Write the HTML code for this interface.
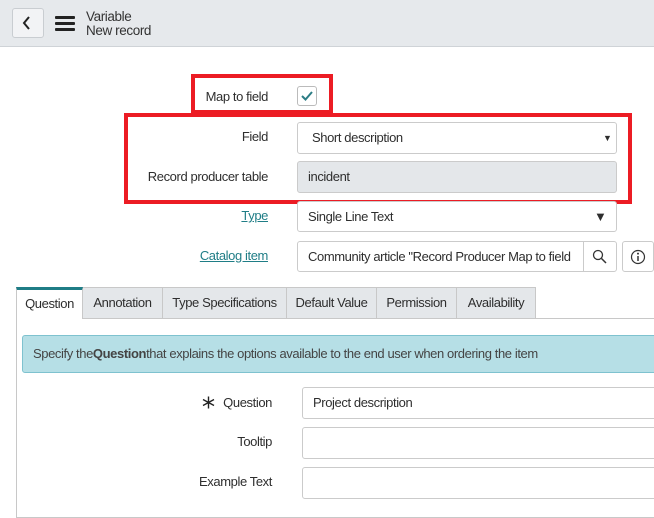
<!DOCTYPE html>
<html><head><meta charset="utf-8"><style>
*{box-sizing:border-box;margin:0;padding:0}
body{width:654px;height:518px;overflow:hidden;background:#fff;font-family:"Liberation Sans",sans-serif;font-size:13px;color:#2e2e2e;position:relative;letter-spacing:-0.4px}
.a{position:absolute}
.lbl{position:absolute;text-align:right;white-space:nowrap;line-height:16px}
.inp{position:absolute;border:1px solid #cbcbcb;border-radius:3px;background:#fff;padding-left:10px;line-height:29px;white-space:nowrap;overflow:hidden}
.red{position:absolute;border:4px solid #ec1c24}
.tab{position:absolute;top:287px;height:31px;background:#e4e7ea;border-right:1px solid #c8c8c8;border-top:1px solid #c8c8c8;line-height:30px;text-align:center}
a{color:#1f7d86;text-decoration:underline}
</style></head><body>
<div class="a" style="left:0;top:0;width:654px;height:47px;background:#e6e9ec;border-bottom:1px solid #cfd3d7"></div>
<div class="a" style="left:12px;top:8px;width:32px;height:30px;border:1px solid #c9cdd1;border-radius:3px;background:#f2f3f5"></div>
<svg class="a" style="left:22px;top:16px" width="10" height="14"><path d="M7 1 L2 7 L7 13" stroke="#222" stroke-width="2" fill="none"/></svg>
<div class="a" style="left:55px;top:16px;width:20px;height:3px;background:#222;border-radius:1px"></div>
<div class="a" style="left:55px;top:22px;width:20px;height:3px;background:#222;border-radius:1px"></div>
<div class="a" style="left:55px;top:28px;width:20px;height:3px;background:#222;border-radius:1px"></div>
<div class="a" style="left:86px;top:10px;font-size:13.5px;line-height:14px;color:#333">Variable<br>New record</div>

<div class="red" style="left:191px;top:74px;width:142px;height:40px"></div>
<div class="lbl" style="left:150px;width:118px;top:89px">Map to field</div>
<div class="a" style="left:297px;top:86px;width:20px;height:20px;border:1px solid #bbb;border-radius:3px;background:#fff"></div>
<svg class="a" style="left:300px;top:90px" width="14" height="12"><path d="M2 6 L5.5 9.5 L12 2" stroke="#2c7d85" stroke-width="2" fill="none"/></svg>

<div class="red" style="left:124px;top:113px;width:508px;height:91px"></div>
<div class="lbl" style="left:100px;width:168px;top:129px">Field</div>
<div class="inp" style="left:297px;top:122px;width:320px;height:32px;padding-left:14px">Short description</div>
<div class="a" style="left:603px;top:133px;font-size:9px">▼</div>
<div class="lbl" style="left:100px;width:168px;top:169px">Record producer table</div>
<div class="inp" style="left:297px;top:161px;width:320px;height:32px;background:#e4e7ea">incident</div>

<div class="lbl" style="left:100px;width:168px;top:208px"><a>Type</a></div>
<div class="inp" style="left:297px;top:201px;width:320px;height:31px">Single Line Text</div>
<div class="a" style="left:594px;top:209px;font-size:13px">▼</div>
<div class="lbl" style="left:100px;width:168px;top:248px"><a>Catalog item</a></div>
<div class="inp" style="left:297px;top:241px;width:287px;height:31px;border-radius:3px 0 0 3px">Community article "Record Producer Map to field</div>
<div class="a" style="left:583px;top:241px;width:34px;height:31px;border:1px solid #cbcbcb;border-radius:0 3px 3px 0;background:#fff"></div>
<svg class="a" style="left:592px;top:249px" width="16" height="16"><circle cx="6" cy="6" r="4.5" stroke="#333" stroke-width="1.3" fill="none"/><path d="M9.5 9.5 L14 14" stroke="#333" stroke-width="1.5"/></svg>
<div class="a" style="left:622px;top:241px;width:32px;height:31px;border:1px solid #cbcbcb;border-radius:3px;background:#fff"></div>
<svg class="a" style="left:630px;top:249px" width="16" height="16"><circle cx="8" cy="8" r="6.5" stroke="#333" stroke-width="1.2" fill="none"/><path d="M8 7 V12" stroke="#333" stroke-width="1.5"/><circle cx="8" cy="4.6" r="1" fill="#333"/></svg>

<div class="a" style="left:16px;top:318px;width:638px;height:200px;border-left:1px solid #c8c8c8;border-top:1px solid #c8c8c8;border-bottom:1px solid #c8c8c8"></div>
<div class="tab" style="left:16px;width:67px;background:#fff;border-top:3px solid #1f7d86;border-left:1px solid #c8c8c8;height:32px;line-height:28px">Question</div>
<div class="tab" style="left:83px;width:80px">Annotation</div>
<div class="tab" style="left:163px;width:124px">Type Specifications</div>
<div class="tab" style="left:287px;width:90px">Default Value</div>
<div class="tab" style="left:377px;width:80px">Permission</div>
<div class="tab" style="left:457px;width:79px">Availability</div>

<div class="a" style="left:22px;top:335px;width:640px;height:38px;background:#b6dfe6;border:1px solid #7ec2cf;border-radius:3px;padding-left:10px;line-height:36px;color:#444">Specify the<b>Question</b>that explains the options available to the end user when ordering the item</div>

<svg class="a" style="left:202px;top:396px" width="13" height="13"><path d="M6.5 0.5 V12.5 M1 3.5 L12 9.5 M1 9.5 L12 3.5" stroke="#222" stroke-width="1.4"/></svg>
<div class="lbl" style="left:150px;width:122px;top:395px">Question</div>
<div class="inp" style="left:302px;top:387px;width:360px;height:32px">Project description</div>
<div class="lbl" style="left:150px;width:122px;top:434px">Tooltip</div>
<div class="inp" style="left:302px;top:427px;width:360px;height:32px"></div>
<div class="lbl" style="left:150px;width:122px;top:474px">Example Text</div>
<div class="inp" style="left:302px;top:467px;width:360px;height:32px"></div>
</body></html>
